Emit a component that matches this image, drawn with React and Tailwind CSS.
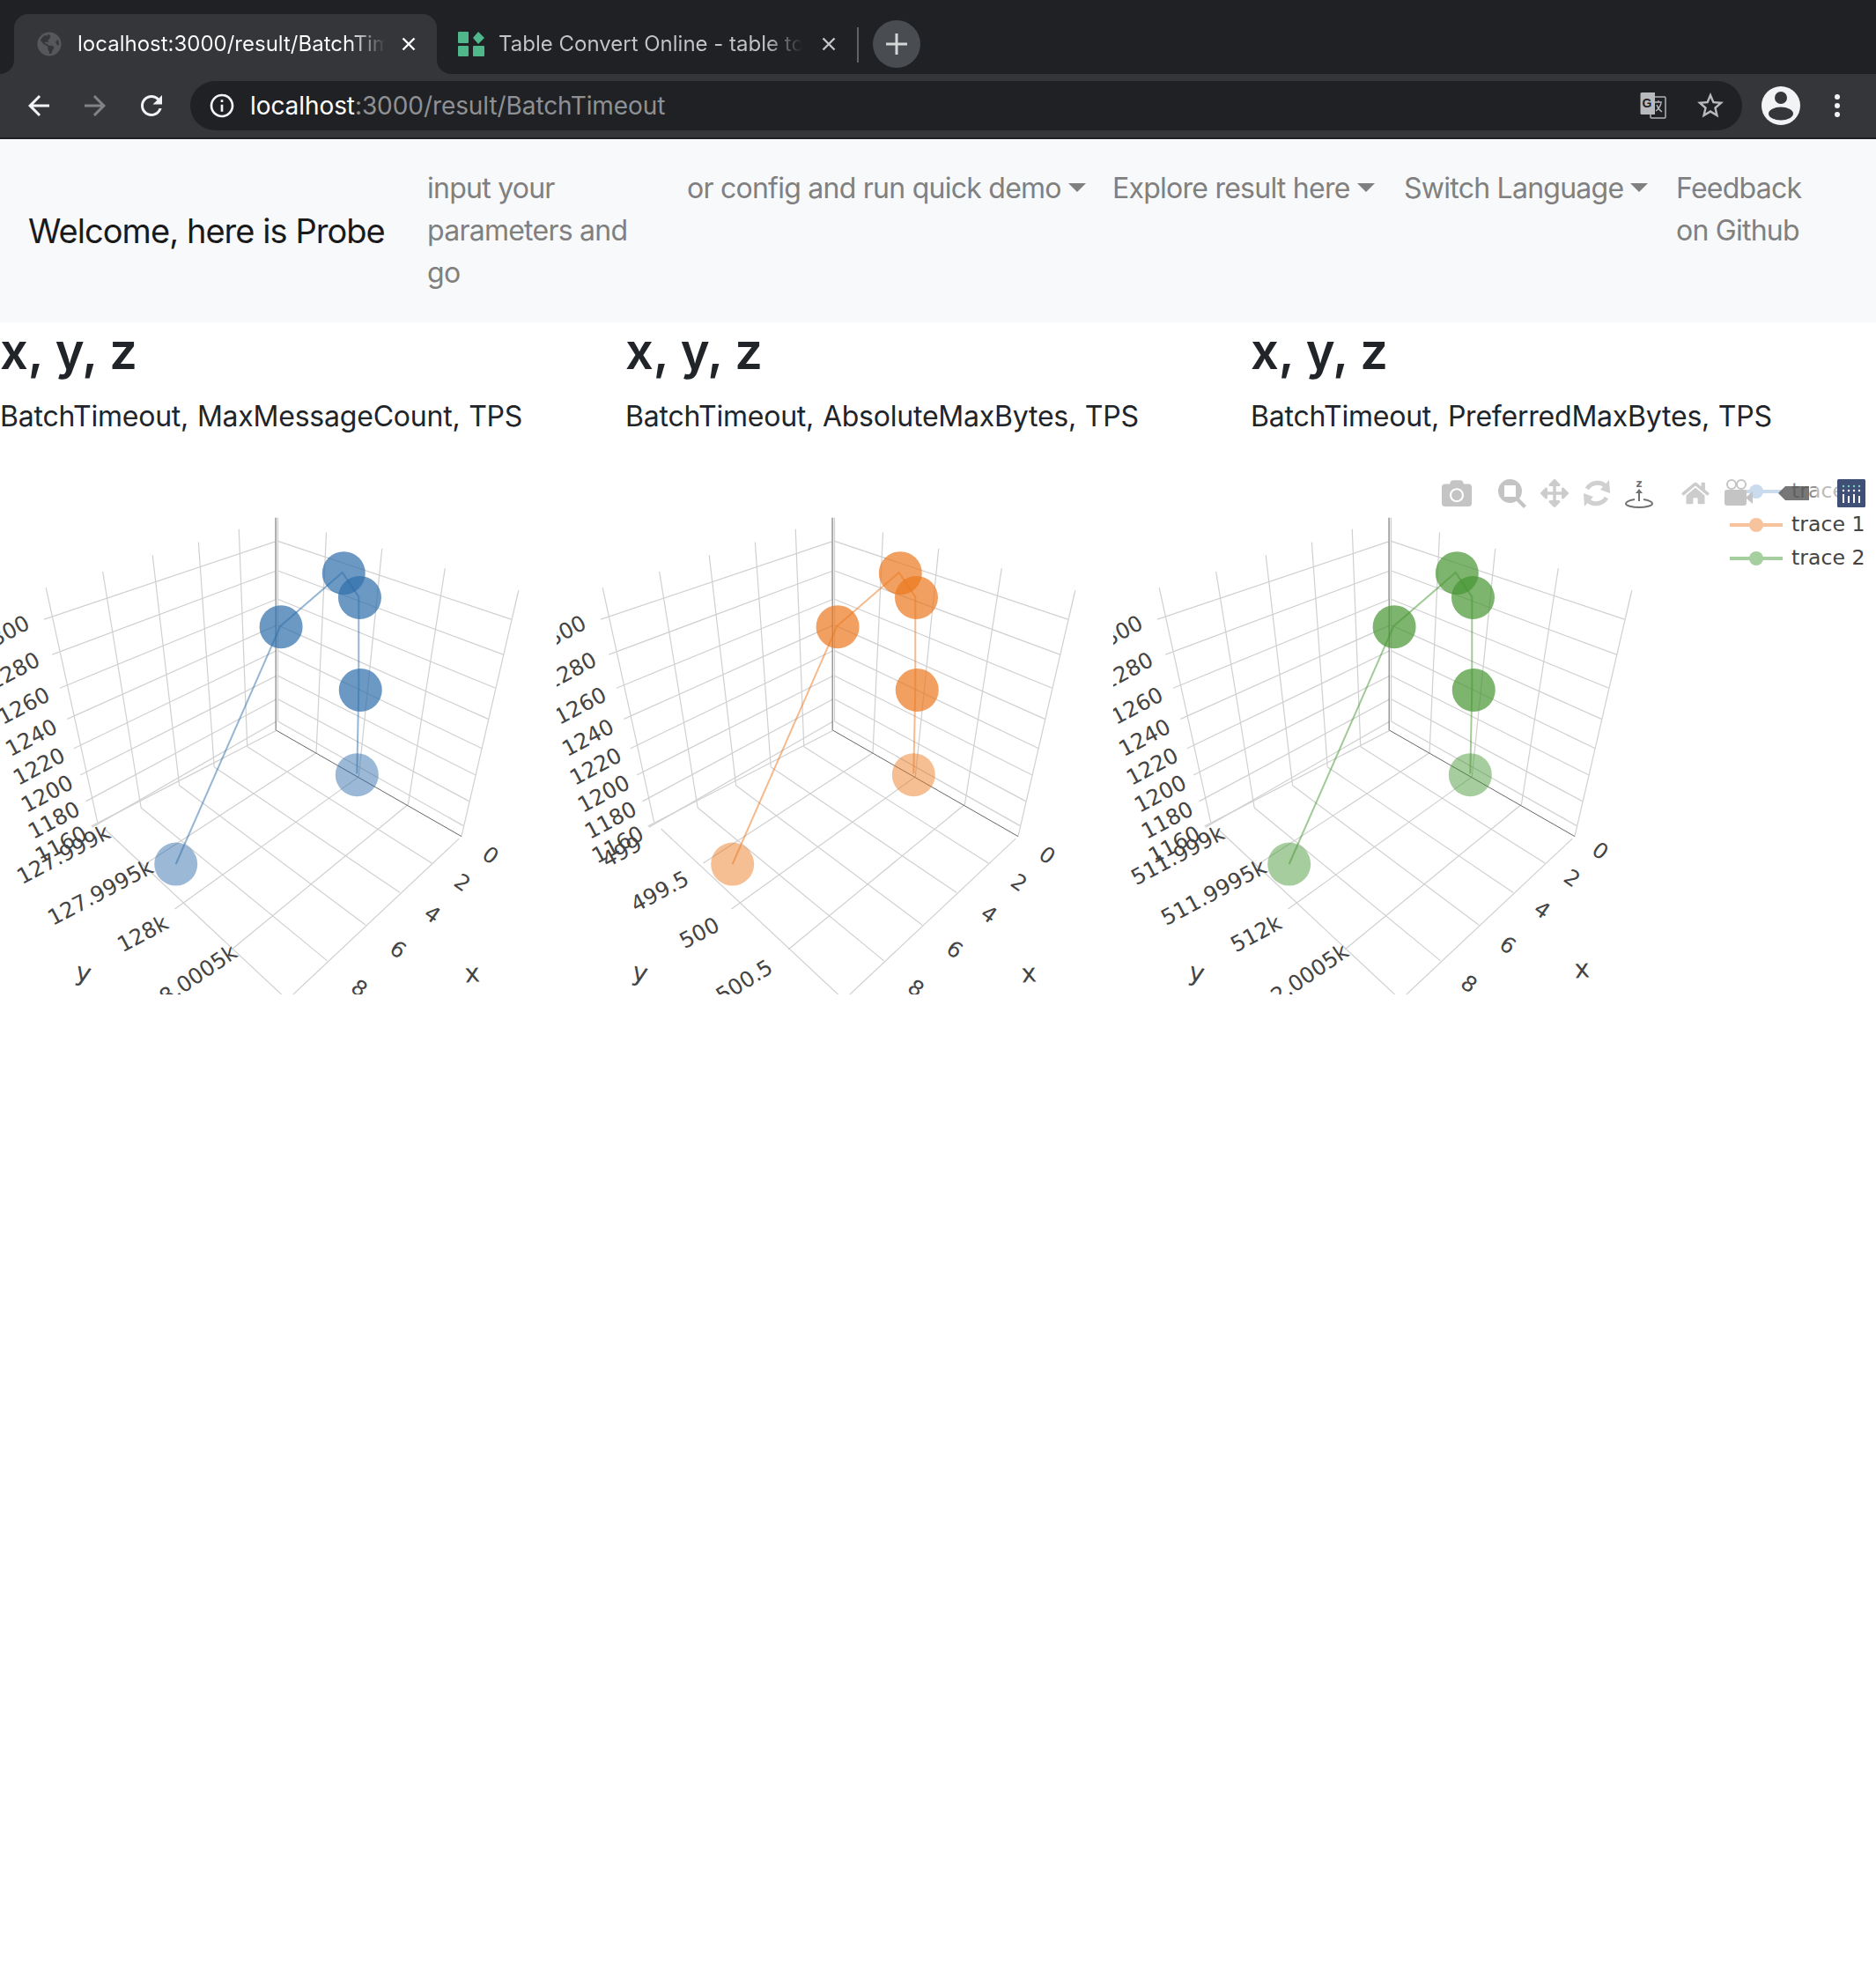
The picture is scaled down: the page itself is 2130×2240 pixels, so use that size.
import { FaArrowsAlt, FaCamera, FaGlobeAmericas, FaHome } from "react-icons/fa";

const BUBBLES = [
  { x: 987, y: 245, solid: true },
  { x: 1033, y: 320, solid: true },
  { x: 807, y: 410, solid: true },
  { x: 1035, y: 604, solid: true },
  { x: 1025, y: 864, solid: false },
  { x: 505, y: 1138, solid: false },
];

const TRACE_PATH = [
  [505, 1138],
  [805, 408],
  [983, 243],
  [1030, 318],
  [1030, 600],
  [1025, 860],
];

const Z_TICKS = [
  ["1300", 10, 432],
  ["1280", 40, 545],
  ["1260", 68, 652],
  ["1240", 90, 750],
  ["1220", 112, 838],
  ["1200", 135, 922],
  ["1180", 155, 1003],
  ["1160", 175, 1078],
];

const X_TICKS = [
  ["0", 557, 971],
  ["2", 525, 1002],
  ["4", 491, 1038],
  ["6", 452, 1078],
  ["8", 408, 1122],
];

const GRID_Y_LEFT = [147, 238, 325, 405, 483, 560, 632, 700];
const WALL_LEFT = [
  [127, 387],
  [150, 495],
  [172, 598],
  [193, 693],
  [212, 783],
  [230, 865],
  [247, 945],
  [265, 1025],
];
const WALL_RIGHT = [
  [1468, 387],
  [1445, 495],
  [1423, 598],
  [1402, 693],
  [1384, 783],
  [1366, 865],
  [1347, 945],
  [1330, 1020],
];

// everything below is measured in crop units, toPx maps it to the plot
const GRID = [
  ...WALL_LEFT.map(([x, y], i) => [x, y, 794, GRID_Y_LEFT[i]]),
  ...WALL_RIGHT.map(([x, y], i) => [798, GRID_Y_LEFT[i], x, y]),
  [132, 290, 280, 1010],
  [295, 240, 405, 965],
  [438, 190, 515, 897],
  [570, 150, 615, 840],
  [686, 110, 710, 778],
  [798, 75, 798, 700],
  [937, 120, 908, 797],
  [1097, 170, 1030, 870],
  [1278, 230, 1172, 955],
  [1489, 298, 1325, 1053],
  [794, 728, 262, 1022],
  [908, 797, 421, 1135],
  [1030, 870, 502, 1276],
  [1172, 955, 665, 1400],
  [300, 1030, 850, 1580],
  [1318, 1060, 800, 1580],
  [1240, 1135, 710, 778],
  [1148, 1225, 615, 840],
  [1050, 1325, 515, 897],
  [940, 1435, 405, 965],
];

const CHARTS = [
  {
    id: "blue",
    solid: "rgba(46,109,170,0.7)",
    soft: "rgba(46,109,170,0.48)",
    line: "rgba(46,109,170,0.5)",
    yTicks: [
      ["127.999k", 72, 970, -28],
      ["127.9995k", 114, 1013, -28],
      ["128k", 162, 1060, -28],
      ["128.0005k", 212, 1115, -34],
    ],
    xShift: [0, 0],
  },
  {
    id: "orange",
    solid: "rgba(235,120,30,0.7)",
    soft: "rgba(235,120,30,0.48)",
    line: "rgba(235,120,30,0.5)",
    yTicks: [
      ["499", 74, 967, -28],
      ["499.5", 117, 1012, -28],
      ["500", 162, 1059, -28],
      ["500.5", 213, 1114, -32],
    ],
    xShift: [0, 0],
  },
  {
    id: "green",
    solid: "rgba(70,150,50,0.7)",
    soft: "rgba(70,150,50,0.48)",
    line: "rgba(70,150,50,0.5)",
    yTicks: [
      ["511.999k", 73, 971, -28],
      ["511.9995k", 114, 1013, -28],
      ["512k", 162, 1060, -28],
      ["512.0005k", 210, 1114, -34],
    ],
    xShift: [-4, -5],
  },
];

const PLOT_TOP = 529;
const toX = (x) => x / 2.529;
const toY = (y) => 31 + y / 2.703;

function Tick({ x, y, angle = -28, size = "text-[24.5px]", children }) {
  return (
    <text
      textAnchor="middle"
      dominantBaseline="central"
      transform={`translate(${x} ${y}) rotate(${angle})`}
      className={`font-['DejaVu_Sans',sans-serif] fill-[#444444] ${size}`}
    >
      {children}
    </text>
  );
}

function Scene({ chart }) {
  const [dx, dy] = chart.xShift;
  return (
    <svg width="632" height="600" className="shrink-0">
      {GRID.map(([x1, y1, x2, y2], i) => (
        <line
          key={i}
          x1={toX(x1)}
          y1={toY(y1)}
          x2={toX(x2)}
          y2={toY(y2)}
          stroke="#d0d0d0"
          strokeWidth="1.2"
        />
      ))}
      <line x1={toX(792)} y1={toY(75)} x2={toX(792)} y2={toY(325)} stroke="#a8a8a8" strokeWidth="2" />
      <line x1={toX(792)} y1={toY(325)} x2={toX(792)} y2={toY(728)} stroke="#666666" strokeWidth="1" />
      <line x1={toX(794)} y1={toY(728)} x2={toX(1325)} y2={toY(1053)} stroke="#666666" strokeWidth="1" />

      {BUBBLES.map((b, i) => (
        <circle
          key={i}
          cx={toX(b.x)}
          cy={toY(b.y)}
          r="24.5"
          fill={b.solid ? chart.solid : chart.soft}
        />
      ))}
      <polyline
        points={TRACE_PATH.map(([x, y]) => `${toX(x)},${toY(y)}`).join(" ")}
        fill="none"
        stroke={chart.line}
        strokeWidth="2"
      />

      {Z_TICKS.map(([label, x, y]) => (
        <Tick key={label} x={toX(x)} y={toY(y)}>
          {label}
        </Tick>
      ))}
      {chart.yTicks.map(([label, x, y, angle]) => (
        <Tick key={label} x={x} y={y - PLOT_TOP} angle={angle}>
          {label}
        </Tick>
      ))}
      {X_TICKS.map(([label, x, y]) => (
        <Tick key={label} x={x + dx} y={y - PLOT_TOP + dy} angle={35}>
          {label}
        </Tick>
      ))}
      <Tick x={95} y={1104 - PLOT_TOP} angle={12} size="text-[29px]">
        y
      </Tick>
      <Tick x={536 + dx} y={1105 - PLOT_TOP + dy} angle={-4} size="text-[29px]">
        x
      </Tick>
    </svg>
  );
}

function ZoomBoxIcon() {
  return (
    <svg viewBox="0 0 34 34" className="h-[34px] w-[34px]" fill="#c4c4c4">
      <path
        fillRule="evenodd"
        d="M14.5 1a13.5 13.5 0 1 0 0 27 13.5 13.5 0 0 0 0-27zM8 8h13v13H8z"
      />
      <path d="M24 22l9 9-3 3-9-9z" />
    </svg>
  );
}

function OrbitIcon() {
  return (
    <svg viewBox="0 0 34 34" className="h-[34px] w-[34px]" fill="#d0d0d0">
      <path d="M6 12C10 5 20 3 26 8" fill="none" stroke="#d0d0d0" strokeWidth="5" />
      <path d="M31 2l1 15-11-4z" />
      <path d="M28 22C24 29 14 31 8 26" fill="none" stroke="#d0d0d0" strokeWidth="5" />
      <path d="M3 32l-1-15 11 4z" />
    </svg>
  );
}

function TurntableIcon() {
  return (
    <svg viewBox="0 0 34 34" className="h-[34px] w-[34px]">
      <text
        x="17"
        y="10"
        textAnchor="middle"
        className="fill-[#707070] font-['DejaVu_Sans',sans-serif] text-[12px] font-bold"
      >
        z
      </text>
      <path d="M17 12l4 5h-3v9h-2v-9h-3z" fill="#707070" />
      <path
        d="M12 24c-6 1-10 3-10 5 0 2 7 4 15 4s15-2 15-4c0-2-4-4-10-5"
        fill="none"
        stroke="#707070"
        strokeWidth="2"
      />
    </svg>
  );
}

function VideoIcon() {
  return (
    <svg viewBox="0 0 34 34" className="h-[34px] w-[34px]" fill="#c4c4c4">
      <circle cx="10" cy="7" r="5" fill="none" stroke="#c4c4c4" strokeWidth="2" />
      <circle cx="21" cy="7" r="5" fill="none" stroke="#c4c4c4" strokeWidth="2" />
      <rect x="2" y="13" width="25" height="18" rx="3" />
      <path d="M27 21l7-6v14l-7-6z" />
    </svg>
  );
}

function Modebar() {
  return (
    <div className="absolute left-[1637px] top-[14px] flex items-center gap-[14px]">
      <FaCamera className="h-[34px] w-[34px] text-[#c4c4c4]" />
      <div className="ml-[15px]">
        <ZoomBoxIcon />
      </div>
      <FaArrowsAlt className="h-[32px] w-[34px] text-[#cccccc]" />
      <OrbitIcon />
      <TurntableIcon />
      <FaHome className="ml-[16px] h-[28px] w-[34px] text-[#cccccc]" />
      <VideoIcon />
    </div>
  );
}

function LegendRow({ line, dot, label, dim }) {
  return (
    <div className="flex h-[38px] items-center">
      <div className={`relative h-[4px] w-[60px] ${line}`}>
        <div className={`absolute left-[22px] top-[-6px] h-4 w-4 rounded-full ${dot}`} />
      </div>
      <span
        className={`ml-[10px] font-['DejaVu_Sans',sans-serif] text-[23.6px] ${dim ? "text-[#8e8e8e]" : "text-[#444444]"}`}
      >
        {label}
      </span>
    </div>
  );
}

function Legend() {
  return (
    <div className="absolute left-[1964px] top-[10px]">
      <LegendRow line="bg-[#c9dbec]" dot="bg-[#c9dbec]" label="trace 0" dim />
      <LegendRow line="bg-[#f7c39c]" dot="bg-[#f7c39c]" label="trace 1" />
      <LegendRow line="bg-[#a6cf9f]" dot="bg-[#a6cf9f]" label="trace 2" />
    </div>
  );
}

function PlotlyLogo() {
  return (
    <svg viewBox="0 0 32 32" className="absolute left-[2086px] top-[15px] h-8 w-8">
      <rect width="32" height="32" rx="1.5" fill="#3f4f75" />
      {[7, 13, 19, 25].map((x) => (
        <circle key={x} cx={x} cy="8" r="1.2" fill="#79d3c3" />
      ))}
      {[7, 13, 19, 25].map((x) => (
        <circle key={x} cx={x} cy="13" r="1.2" fill="#ffffff" />
      ))}
      <rect x="6" y="17" width="2" height="10" fill="#ffffff" />
      <rect x="12" y="19" width="2" height="8" fill="#ffffff" />
      <rect x="18" y="17" width="2" height="10" fill="#ffffff" />
      <rect x="24" y="19" width="2" height="8" fill="#ffffff" />
    </svg>
  );
}

function CloseIcon({ color }) {
  return (
    <svg viewBox="0 0 20 20" className="h-5 w-5 shrink-0" stroke={color} strokeWidth="2.4">
      <path d="M3.5 3.5l13 13M16.5 3.5l-13 13" />
    </svg>
  );
}

function TabFavicon() {
  return (
    <svg viewBox="0 0 30 28" className="h-7 w-[30px] shrink-0" fill="#4fb78a">
      <rect x="0" y="0" width="12" height="13" rx="1" />
      <path d="M23 0l7 7-7 7-6-7z" />
      <rect x="0" y="16" width="12" height="12" rx="1" />
      <rect x="17" y="16" width="13" height="12" rx="1" />
    </svg>
  );
}

function TranslateIcon() {
  return (
    <svg viewBox="0 0 30 30" className="h-[30px] w-[30px]">
      <rect x="12" y="5" width="17" height="24" rx="1" fill="none" stroke="#b0b2b5" strokeWidth="1.5" />
      <path d="M2 0h15v25H2a1.500 1.500 0 0 1-1.500-1.500V1.500A1.500 1.500 0 0 1 2 0z" fill="#b8babd" />
      <text x="8" y="17" textAnchor="middle" className="fill-[#202124] font-['Liberation_Sans',sans-serif] text-[14px] font-bold">
        G
      </text>
      <path d="M17 11h8M21 9v2M24 12c-1 4-3 7-6 9M19 14c1 3 3 6 6 8" fill="none" stroke="#b8babd" strokeWidth="1.3" />
    </svg>
  );
}

function MaterialIcon({ d, className }) {
  return (
    <svg viewBox="0 0 24 24" className={className} fill="currentColor">
      <path d={d} />
    </svg>
  );
}

const ARROW_BACK = "M20 11H7.830l5.590-5.590L12 4l-8 8 8 8 1.410-1.410L7.830 13H20v-2z";
const REFRESH =
  "M17.650 6.350C16.200 4.900 14.210 4 12 4c-4.420 0-7.990 3.580-7.990 8s3.570 8 7.990 8c3.730 0 6.840-2.550 7.730-6h-2.080c-.82 2.330-3.040 4-5.650 4-3.310 0-6-2.690-6-6s2.690-6 6-6c1.660 0 3.140.69 4.220 1.780L13 11h7V4l-2.350 2.350z";
const INFO =
  "M11 7h2v2h-2zm0 4h2v6h-2zm1-9C6.480 2 2 6.480 2 12s4.480 10 10 10 10-4.480 10-10S17.520 2 12 2zm0 18c-4.410 0-8-3.590-8-8s3.590-8 8-8 8 3.590 8 8-3.590 8-8 8z";
const STAR =
  "M22 9.240l-7.190-.62L12 2 9.190 8.630 2 9.240l5.460 4.730L5.820 21 12 17.270 18.180 21l-1.630-7.030L22 9.240zM12 15.400l-3.760 2.270 1-4.280-3.320-2.880 4.380-.38L12 6.100l1.710 4.040 4.380.38-3.320 2.880 1 4.280L12 15.400z";

function BrowserChrome() {
  return (
    <header className="text-[24px]">
      <div className="flex h-[84px] items-end bg-[#202124] pl-4">
        <div className="relative flex h-[68px] w-[480px] items-center rounded-t-[16px] bg-[#35363a] pl-[26px] pr-[22px]">
          <div className="absolute bottom-0 left-[-16px] h-4 w-4 bg-[#35363a]">
            <div className="h-4 w-4 rounded-br-[16px] bg-[#202124]" />
          </div>
          <div className="absolute bottom-0 right-[-16px] h-4 w-4 bg-[#35363a]">
            <div className="h-4 w-4 rounded-bl-[16px] bg-[#202124]" />
          </div>
          <FaGlobeAmericas className="h-7 w-7 shrink-0 text-[#55575b]" />
          <span className="ml-[18px] w-[350px] overflow-hidden whitespace-nowrap bg-linear-to-r from-white from-[88%] to-transparent bg-clip-text text-transparent">
            localhost:3000/result/BatchTimeout
          </span>
          <div className="ml-auto">
            <CloseIcon color="#ffffff" />
          </div>
        </div>
        <div className="flex h-[68px] w-[477px] items-center pl-6 pr-[22px]">
          <TabFavicon />
          <span className="ml-4 w-[345px] overflow-hidden whitespace-nowrap bg-linear-to-r from-[#c3c5c8] from-[88%] to-transparent bg-clip-text text-transparent">
            Table Convert Online - table to HTML
          </span>
          <div className="ml-auto">
            <CloseIcon color="#c3c5c8" />
          </div>
        </div>
        <div className="mb-[13px] h-10 w-0.5 bg-[#5f6368]" />
        <div className="mb-[7px] ml-4 flex h-[54px] w-[54px] items-center justify-center rounded-full bg-[#494c50]">
          <svg viewBox="0 0 24 24" className="h-6 w-6" fill="#d5d6d8">
            <path d="M10.500 0h3v10.500H24v3H13.500V24h-3V13.500H0v-3h10.500z" />
          </svg>
        </div>
      </div>
      <div className="flex h-[72px] items-center bg-[#35363a] pl-[26px] pr-[33px]">
        <MaterialIcon d={ARROW_BACK} className="h-9 w-9 text-[#f1f3f4]" />
        <MaterialIcon d={ARROW_BACK} className="ml-[28px] h-9 w-9 rotate-180 text-[#808285]" />
        <MaterialIcon d={REFRESH} className="ml-[28px] h-9 w-9 text-[#f1f3f4]" />
        <div className="ml-[26px] flex h-14 w-[1762px] items-center rounded-full bg-[#202124] pl-5 pr-[18px]">
          <MaterialIcon d={INFO} className="h-8 w-8 text-[#f1f3f4]" />
          <div className="ml-4 whitespace-nowrap text-[28px] tracking-[-0.08px] text-[#8e9194]">
            <span className="text-white">localhost</span>:3000/result/BatchTimeout
          </div>
          <div className="ml-auto flex items-center gap-8">
            <TranslateIcon />
            <MaterialIcon d={STAR} className="h-9 w-9 text-[#b8babd]" />
          </div>
        </div>
        <svg viewBox="0 0 44 44" className="ml-[22px] h-11 w-11">
          <circle cx="22" cy="22" r="22" fill="#f1f3f4" />
          <circle cx="22" cy="13" r="7" fill="#35363a" />
          <ellipse cx="22" cy="31" rx="14" ry="7.500" fill="#35363a" />
        </svg>
        <div className="ml-[39px] flex flex-col gap-1">
          <div className="h-1.5 w-1.5 rounded-full bg-[#f1f3f4]" />
          <div className="h-1.5 w-1.5 rounded-full bg-[#f1f3f4]" />
          <div className="h-1.5 w-1.5 rounded-full bg-[#f1f3f4]" />
        </div>
      </div>
      <div className="h-0.5 bg-[#202124]" />
    </header>
  );
}

function Caret() {
  return (
    <span className="ml-2 inline-block h-0 w-0 border-x-[10px] border-t-[10px] border-x-transparent border-t-[#808080] align-[7px]" />
  );
}

const NAV_LINK = "pb-[16px] pl-4 pr-4 pt-[16px]";

function Navbar() {
  return (
    <nav className="flex items-center bg-[#f8f9fa] px-8 py-4 text-[32px] leading-[48px] tracking-[-0.75px] text-[#808080]">
      <a className="mr-8 w-[405px] shrink-0 whitespace-nowrap text-[38px] tracking-[-0.95px] text-[#1a1a1a]">
        Welcome, here is Probe
      </a>
      <div className="flex items-start">
        <a className={`w-[295px] ${NAV_LINK}`}>input your parameters and go</a>
        <a className={`w-[483px] whitespace-nowrap ${NAV_LINK}`}>
          or config and run quick demo
          <Caret />
        </a>
        <a className={`w-[331px] whitespace-nowrap ${NAV_LINK}`}>
          Explore result here
          <Caret />
        </a>
        <a className={`w-[309px] whitespace-nowrap ${NAV_LINK}`}>
          Switch Language
          <Caret />
        </a>
        <a className={`w-[190px] ${NAV_LINK}`}>Feedback on Github</a>
      </div>
    </nav>
  );
}

const HEADINGS = [
  "BatchTimeout, MaxMessageCount, TPS",
  "BatchTimeout, AbsoluteMaxBytes, TPS",
  "BatchTimeout, PreferredMaxBytes, TPS",
];

export default function App() {
  return (
    <div className="min-h-[2240px] bg-white font-['Inter',sans-serif] text-[#212529]">
      <BrowserChrome />
      <Navbar />
      <div className="grid grid-cols-3">
        {HEADINGS.map((text) => (
          <div key={text}>
            <h3 className="mb-4 text-[56px] font-semibold leading-[67px]">x, y, z</h3>
            <p className="mb-8 text-[32px] leading-[48px] tracking-[-0.22px] [word-spacing:1px]">{text}</p>
          </div>
        ))}
      </div>
      <div className="relative flex h-[600px] overflow-hidden">
        {CHARTS.map((chart) => (
          <Scene key={chart.id} chart={chart} />
        ))}
        <Legend />
        <Modebar />
        {/* tooltip arrow caught mid-fade over the first legend row */}
        <div className="absolute left-[2027px] top-[23px] h-4 w-[27px] bg-[#555555]/80" />
        <div className="absolute left-[2019px] top-[23px] h-0 w-0 border-y-8 border-r-8 border-y-transparent border-r-[#555555]/80" />
        <div className="absolute left-[2062px] top-[20px] h-[24px] w-[24px] bg-white/40" />
        <PlotlyLogo />
      </div>
    </div>
  );
}
